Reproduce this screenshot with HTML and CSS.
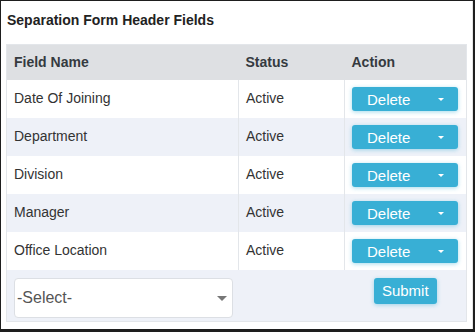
FILE: index.html
```html
<!DOCTYPE html>
<html lang="en">
<head>
  <meta charset="UTF-8" />
  <title>Separation Form Header Fields</title>
  <link rel="stylesheet" href="styles.css">
</head>
<body>
  <div class="frame">
    <div class="panel">
      <h1>Separation Form Header Fields</h1>
      <table class="fields">
        <thead>
          <tr>
            <th class="col-name">Field Name</th>
            <th class="col-status">Status</th>
            <th class="col-action">Action</th>
          </tr>
        </thead>
        <tbody>
          <tr>
            <td>Date Of Joining</td>
            <td>Active</td>
            <td><button class="btn-drop">Delete <span class="caret"></span></button></td>
          </tr>
          <tr>
            <td>Department</td>
            <td>Active</td>
            <td><button class="btn-drop">Delete <span class="caret"></span></button></td>
          </tr>
          <tr>
            <td>Division</td>
            <td>Active</td>
            <td><button class="btn-drop">Delete <span class="caret"></span></button></td>
          </tr>
          <tr>
            <td>Manager</td>
            <td>Active</td>
            <td><button class="btn-drop">Delete <span class="caret"></span></button></td>
          </tr>
          <tr>
            <td>Office Location</td>
            <td>Active</td>
            <td><button class="btn-drop">Delete <span class="caret"></span></button></td>
          </tr>
        </tbody>
        <tfoot>
          <tr>
            <td>
              <div class="select-wrap">
                <select class="field-select">
                  <option>-Select-</option>
                </select>
              </div>
            </td>
            <td></td>
            <td class="submit-cell"><button class="btn-submit">Submit</button></td>
          </tr>
        </tfoot>
      </table>
    </div>
  </div>
</body>
</html>
```

FILE: styles.css
```css
html, body { margin: 0; padding: 0; background: #fff; }
body { font-family: "Liberation Sans", Arial, sans-serif; color: #333; }

.frame {
  width: 475px;
  height: 332px;
  box-sizing: border-box;
  border: 1px solid #1e1e1e;
  border-right-width: 2px;
  border-bottom-width: 3px;
  background: #fff;
}
.panel {
  height: 100%;
  box-sizing: border-box;
  padding: 9px 4px 0 5px;
  border-right: 1px solid #e4e4e4;
}
h1 {
  margin: 0 0 14px 1px;
  font-size: 14px;
  line-height: 20px;
  font-weight: bold;
  color: #222;
}

.fields {
  width: 460px;
  table-layout: fixed;
  border-collapse: collapse;
  border: 1px solid #e3e6ea;
  font-size: 14px;
}
.col-name { width: 232px; }
.col-status { width: 106px; }
.col-action { width: 122px; }
.fields th {
  height: 35px;
  padding: 0 7px;
  box-sizing: border-box;
  text-align: left;
  background: #dee0e3;
  color: #353a3f;
  font-weight: bold;
}
.fields tbody td {
  height: 38px;
  box-sizing: border-box;
  padding: 0 7px 1px 7px;
  border-left: 1px solid #e3e6ea;
  vertical-align: middle;
}
.fields tbody tr:nth-child(even) td { background: #eef1f8; }

.btn-drop {
  display: flex;
  align-items: center;
  width: 106px;
  height: 24px;
  margin-top: 2px;
  padding: 0 14px 0 15px;
  border: 0;
  border-radius: 3px;
  background: #38afd5;
  color: #fff;
  font-family: "Liberation Sans", Arial, sans-serif;
  font-size: 15px;
  box-shadow: 0 1px 4px rgba(56, 175, 213, 0.45);
}
.caret {
  margin-left: auto;
  width: 0;
  height: 0;
  border-left: 3px solid transparent;
  border-right: 3px solid transparent;
  border-top: 3px solid #fff;
}

.fields tfoot td {
  height: 52px;
  box-sizing: border-box;
  padding: 0;
  background: #eef1f8;
  border-bottom: 1px solid #e3e6ea;
  vertical-align: top;
}
.select-wrap {
  position: relative;
  margin: 8px 6px 0 7px;
}
.field-select {
  width: 100%;
  height: 40px;
  padding: 0 24px 0 2px;
  border: 1px solid #dcdfe4;
  border-radius: 4px;
  background: #fff;
  color: #555;
  font-family: "Liberation Sans", Arial, sans-serif;
  font-size: 16px;
  appearance: none;
  -webkit-appearance: none;
}
.select-wrap::after {
  content: "";
  position: absolute;
  right: 6px;
  top: 18px;
  border-left: 5px solid transparent;
  border-right: 5px solid transparent;
  border-top: 5px solid #777;
}
.submit-cell { text-align: center; }
.btn-submit {
  margin-top: 8px;
  height: 26px;
  padding: 0 8px;
  border: 0;
  border-radius: 3px;
  background: #38afd5;
  color: #fff;
  font-family: "Liberation Sans", Arial, sans-serif;
  font-size: 15px;
  box-shadow: 0 1px 4px rgba(56, 175, 213, 0.45);
}
```
